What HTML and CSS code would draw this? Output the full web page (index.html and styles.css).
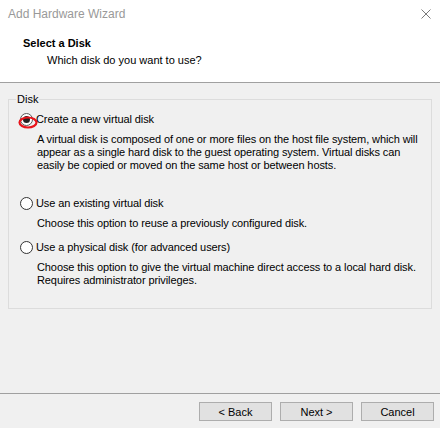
FILE: index.html
```html
<!DOCTYPE html>
<html>
<head>
<meta charset="utf-8">
<link rel="stylesheet" href="styles.css">
</head>
<body>
<div class="window">
  <div class="header">
    <div class="titlebar">
      <span class="title">Add Hardware Wizard</span>
      <svg class="close" width="10" height="10" viewBox="0 0 10 10"><path d="M0.5 0.5 L9.5 9.5 M9.5 0.5 L0.5 9.5" stroke="#7a7a7a" stroke-width="1" fill="none"/></svg>
    </div>
    <div class="heading">Select a Disk</div>
    <div class="subheading">Which disk do you want to use?</div>
  </div>
  <div class="body">
    <fieldset class="group">
      <legend class="legend">Disk</legend>
      <div class="option first">
        <div class="opt-label">
          <span class="radio">
            <svg width="13" height="13" viewBox="0 0 13 13"><circle cx="6.5" cy="6.5" r="6" fill="#fff" stroke="#5a5a5a"/><circle cx="6.5" cy="6.5" r="3.5" fill="#222"/></svg>
            <svg class="mark" width="20" height="13" viewBox="0 0 20 13"><ellipse cx="10" cy="6.5" rx="8.5" ry="5" fill="none" stroke="#e8141b" stroke-width="2.2"/></svg>
          </span>Create a new virtual disk
        </div>
        <p class="desc tall">A virtual disk is composed of one or more files on the host file system, which will appear as a single hard disk to the guest operating system. Virtual disks can easily be copied or moved on the same host or between hosts.</p>
      </div>
      <div class="option">
        <div class="opt-label">
          <span class="radio"><svg width="13" height="13" viewBox="0 0 13 13"><circle cx="6.5" cy="6.5" r="6" fill="#fff" stroke="#333"/></svg></span>Use an existing virtual disk
        </div>
        <p class="desc">Choose this option to reuse a previously configured disk.</p>
      </div>
      <div class="option">
        <div class="opt-label">
          <span class="radio"><svg width="13" height="13" viewBox="0 0 13 13"><circle cx="6.5" cy="6.5" r="6" fill="#fff" stroke="#333"/></svg></span>Use a physical disk (for advanced users)
        </div>
        <p class="desc">Choose this option to give the virtual machine direct access to a local hard disk. Requires administrator privileges.</p>
      </div>
    </fieldset>
  </div>
  <div class="footer">
    <button class="btn">&lt; Back</button>
    <button class="btn">Next &gt;</button>
    <button class="btn">Cancel</button>
  </div>
</div>
</body>
</html>
```
FILE: styles.css
```css
html, body {
  margin: 0;
  padding: 0;
  background: #f0f0f0;
}
.window {
  width: 440px;
  height: 428px;
  font-family: "Liberation Sans", Arial, sans-serif;
  font-size: 11px;
  color: #000;
  display: flex;
  flex-direction: column;
  background: #f0f0f0;
}
.header {
  height: 82px;
  background: #fff;
  border-bottom: 1px solid #a0a0a0;
  box-sizing: content-box;
}
.titlebar {
  height: 28px;
  display: flex;
  align-items: center;
  justify-content: space-between;
  padding: 0 9px 0 8px;
}
.title {
  color: #999;
  font-size: 12px;
}
.close {
  display: block;
}
.heading {
  font-weight: bold;
  padding-left: 23px;
  margin-top: 8px;
  line-height: 14px;
}
.subheading {
  padding-left: 47px;
  margin-top: 3px;
  line-height: 14px;
}
.body {
  height: 310px;
  padding-top: 10px;
  box-sizing: border-box;
}
.group {
  margin: 0 8px;
  padding: 0;
  border: 1px solid #dcdcdc;
  height: 216px;
  box-sizing: border-box;
}
.legend {
  padding: 0 1px;
  margin-left: 7px;
  line-height: 13px;
}
.option {
  padding-left: 11px;
  letter-spacing: -0.1px;
}
.option.first {
  margin-top: 7px;
}
.opt-label {
  display: flex;
  align-items: center;
  line-height: 13px;
  height: 13px;
}
.radio {
  position: relative;
  width: 13px;
  height: 13px;
  margin-right: 3px;
}
.radio svg {
  display: block;
}
.radio .mark {
  position: absolute;
  left: -2px;
  top: 3px;
}
.desc {
  margin: 7px 0 0 17px;
  line-height: 13px;
  width: 390px;
}
.option .desc {
  margin-bottom: 11px;
}
.option .desc.tall {
  height: 52px;
  margin-bottom: 12px;
}
.footer {
  border-top: 1px solid #a0a0a0;
  display: flex;
  justify-content: flex-end;
  gap: 8px;
  padding: 8px 6px 0 0;
}
.btn {
  width: 73px;
  height: 19px;
  margin: 0;
  padding: 0;
  background: #e1e1e1;
  border: 1px solid #adadad;
  border-radius: 0;
  font-family: "Liberation Sans", Arial, sans-serif;
  font-size: 11px;
  color: #000;
}
```
